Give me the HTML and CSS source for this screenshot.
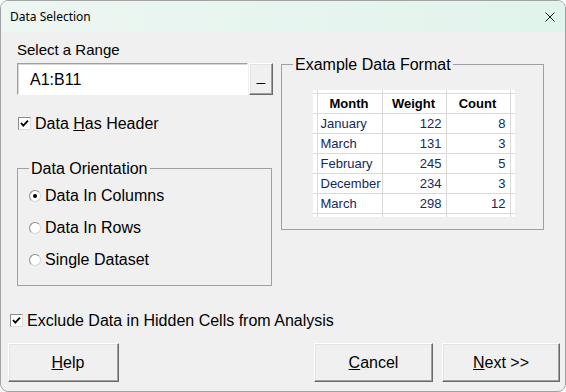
FILE: index.html
```html
<!DOCTYPE html>
<html>

<head>
  <title>Data Selection</title>
  <link rel="stylesheet" href="styles.css">
</head>

<body>
  <div class="window">
    <div class="titlebar">
      <span class="title">Data Selection</span>
      <svg class="close" width="10" height="10" viewBox="0 0 10 10">
        <path d="M0.5 0.5 L9.5 9.5 M9.5 0.5 L0.5 9.5" stroke="#1a1a1a" stroke-width="1" fill="none"/>
      </svg>
    </div>

    <div class="top">
      <div class="left">
        <div class="label">Select a Range</div>
        <div class="range-row">
          <div class="range-box">A1:B11</div>
          <div class="range-btn">_</div>
        </div>

        <div class="check-row header-check">
          <span class="check"><svg width="11" height="11" viewBox="0 0 11 11"><path d="M2 5 L4.3 7.6 L9 2.6" stroke="#000" stroke-width="1.8" fill="none"/></svg></span>
          <span>Data <u>H</u>as Header</span>
        </div>

        <fieldset class="group orient">
          <legend>Data Orientation</legend>
          <div class="radio-row"><span class="radio on"></span>Data In Columns</div>
          <div class="radio-row"><span class="radio"></span>Data In Rows</div>
          <div class="radio-row"><span class="radio"></span>Single Dataset</div>
        </fieldset>
      </div>

      <fieldset class="group example">
        <legend>Example Data Format</legend>
        <table class="sheet">
          <col class="c-edge"><col class="c-month"><col class="c-num"><col class="c-num"><col class="c-edge2">
          <tr class="edge-top"><td></td><td></td><td></td><td></td><td></td></tr>
          <tr class="head"><td></td><td>Month</td><td>Weight</td><td>Count</td><td></td></tr>
          <tr><td></td><td class="txt">January</td><td>122</td><td>8</td><td></td></tr>
          <tr><td></td><td class="txt">March</td><td>131</td><td>3</td><td></td></tr>
          <tr><td></td><td class="txt">February</td><td>245</td><td>5</td><td></td></tr>
          <tr><td></td><td class="txt">December</td><td>234</td><td>3</td><td></td></tr>
          <tr><td></td><td class="txt">March</td><td>298</td><td>12</td><td></td></tr>
          <tr class="edge-bottom"><td></td><td></td><td></td><td></td><td></td></tr>
        </table>
      </fieldset>
    </div>

    <div class="check-row exclude">
      <span class="check"><svg width="11" height="11" viewBox="0 0 11 11"><path d="M2 5 L4.3 7.6 L9 2.6" stroke="#000" stroke-width="1.8" fill="none"/></svg></span>
      <span>Exclude Data in Hidden Cells from Analysis</span>
    </div>

    <div class="buttons">
      <button class="btn help-btn"><u>H</u>elp</button>
      <div class="spacer"></div>
      <button class="btn cancel-btn"><u>C</u>ancel</button>
      <button class="btn next-btn"><u>N</u>ext &gt;&gt;</button>
    </div>
  </div>
</body>

</html>
```

FILE: styles.css
```css
body{
    margin: 0;
    font-family: "Liberation Sans", Arial, sans-serif;
    color: #000;
}
.window{
    width: 566px;
    height: 392px;
    box-sizing: border-box;
    border: 1px solid #a3a3a3;
    border-radius: 8px;
    background-color: #f0f0f0;
    overflow: hidden;
}
.titlebar{
    height: 31px;
    display: flex;
    align-items: center;
    justify-content: space-between;
    padding: 0 10px 0 9px;
    background: linear-gradient(90deg, #edf6f2, #e0f4ec);
}
.title{
    font-family: "Noto Sans", sans-serif;
    font-size: 12px;
}

.top{
    display: flex;
    align-items: flex-start;
    gap: 8px;
    padding-left: 16px;
}
.left{
    width: 256px;
}
.label{
    margin-top: 9px;
    font-size: 15px;
    line-height: 18px;
}
.range-row{
    margin-top: 4px;
    display: flex;
    gap: 1px;
    height: 32px;
}
.range-box{
    width: 231px;
    box-sizing: border-box;
    background-color: white;
    border: 1px solid;
    border-color: #a0a0a0 #ffffff #ffffff #a0a0a0;
    box-shadow: inset 1px 1px #d8d8d8;
    padding: 1px 0 0 12px;
    font-size: 16px;
    line-height: 29px;
}
.range-btn{
    width: 24px;
    box-sizing: border-box;
    border: 1px solid;
    border-color: #ffffff #696969 #696969 #ffffff;
    box-shadow: inset -1px -1px #a0a0a0, inset 1px 1px #e3e3e3;
    text-align: center;
    font-size: 15px;
    line-height: 23px;
}

.check-row{
    display: flex;
    align-items: center;
    gap: 4px;
    height: 18px;
    font-size: 16px;
}
.check-row span:last-child{
    padding-top: 2px;
}
.header-check{
    margin-top: 19px;
    padding-left: 1px;
}
.check{
    width: 13px;
    height: 13px;
    box-sizing: border-box;
    background-color: white;
    border: 1px solid;
    border-color: #8c8c8c #dcdcdc #dcdcdc #8c8c8c;
    display: flex;
    align-items: center;
    justify-content: center;
}

.group{
    margin: 0;
    border: 1px solid #a0a0a0;
    font-size: 16px;
}
.group legend{
    padding: 2px 2px 0 2px;
    line-height: 18px;
}
.orient{
    width: 255px;
    box-sizing: border-box;
    margin-top: 26px;
    padding: 8px 0 16px 11px;
    display: flex;
    flex-direction: column;
    gap: 13px;
}
.radio-row{
    display: flex;
    align-items: center;
    gap: 4px;
    height: 18px;
    padding-top: 1px;
}
.radio-row .radio{
    margin-top: -1px;
}
.radio{
    width: 12px;
    height: 12px;
    box-sizing: border-box;
    border-radius: 50%;
    background-color: white;
    border: 1px solid;
    border-color: #8a8a8a #d6d6d6 #d6d6d6 #8a8a8a;
    display: flex;
    align-items: center;
    justify-content: center;
}
.radio.on::after{
    content: "";
    width: 4px;
    height: 4px;
    border-radius: 50%;
    background-color: #000;
}

.example{
    width: 263px;
    box-sizing: border-box;
    margin-top: 22px;
    padding: 16px 11px 12px 11px;
}
.sheet{
    margin-left: 20px;
    width: 202px;
    table-layout: fixed;
    border-collapse: collapse;
    border-style: hidden;
    background-color: white;
    font-size: 13px;
    color: #12295a;
}
.c-edge{ width: 4px; }
.c-month{ width: 65px; }
.c-num{ width: 64px; }
.c-edge2{ width: 5px; }
.sheet td{
    border: 1px solid #dadada;
    padding: 0 4px 0 3px;
    text-align: right;
    white-space: nowrap;
    overflow: hidden;
}
.sheet tr{
    height: 20px;
}
.sheet .edge-top{
    height: 3px;
}
.sheet .edge-bottom{
    height: 4px;
}
.sheet td.txt{
    text-align: left;
}
.sheet .head td{
    text-align: center;
    font-weight: bold;
    color: #000;
}

.exclude{
    margin-top: 25px;
    padding-left: 9px;
}

.buttons{
    margin-top: 14px;
    display: flex;
    gap: 9px;
    padding: 0 5px 0 7px;
}
.spacer{
    flex: 1;
}
.btn{
    height: 39px;
    box-sizing: border-box;
    background-color: #f0f0f0;
    border: 1px solid;
    border-color: #ffffff #696969 #696969 #ffffff;
    box-shadow: inset -1px -1px #a0a0a0, inset 1px 1px #e3e3e3;
    font-family: "Liberation Sans", Arial, sans-serif;
    font-size: 16px;
    color: #000;
    padding: 1px 0 0 0;
}
.help-btn{
    width: 111px;
    padding-left: 9px;
}
.cancel-btn{
    width: 119px;
}
.next-btn{
    width: 118px;
}
```
